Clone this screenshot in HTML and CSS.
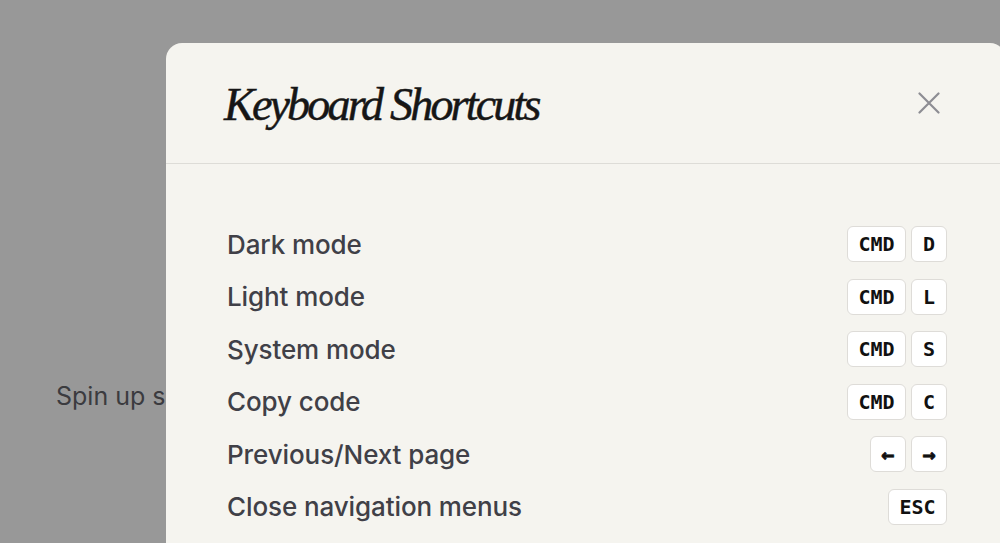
FILE: index.html
```html
<!DOCTYPE html>
<html lang="en">
<head>
<meta charset="utf-8">
<title>Keyboard Shortcuts</title>
<link rel="stylesheet" href="styles.css">
</head>
<body>
<main class="page">
  <p class="intro">Spin up servers in seconds</p>
</main>
<div class="modal" role="dialog" aria-label="Keyboard Shortcuts">
  <header class="modal-header">
    <h2 class="modal-title">Keyboard Shortcuts</h2>
    <button class="close" aria-label="Close">
      <svg width="22" height="22" viewBox="0 0 22 22" fill="none" stroke="currentColor" stroke-width="2.2" stroke-linecap="round"><path d="M1.5 1.5L20.5 20.5M20.5 1.5L1.5 20.5"/></svg>
    </button>
  </header>
  <ul class="shortcuts">
    <li class="row"><span class="label">Dark mode</span><span class="keys"><kbd>CMD</kbd><kbd>D</kbd></span></li>
    <li class="row"><span class="label">Light mode</span><span class="keys"><kbd>CMD</kbd><kbd>L</kbd></span></li>
    <li class="row"><span class="label">System mode</span><span class="keys"><kbd>CMD</kbd><kbd>S</kbd></span></li>
    <li class="row"><span class="label">Copy code</span><span class="keys"><kbd>CMD</kbd><kbd>C</kbd></span></li>
    <li class="row"><span class="label">Previous/Next page</span><span class="keys"><kbd class="arrow">←</kbd><kbd class="arrow">→</kbd></span></li>
    <li class="row"><span class="label">Close navigation menus</span><span class="keys"><kbd>ESC</kbd></span></li>
  </ul>
</div>
</body>
</html>
```

FILE: styles.css
```css
html, body {
  margin: 0;
  padding: 0;
  height: 100%;
  overflow: hidden;
}
body {
  background: #989898;
  font-family: Inter, "Noto Sans", sans-serif;
}
.page {
  padding: 376px 0 0 56px;
}
.intro {
  margin: 0;
  font-size: 25px;
  line-height: 40px;
  color: #3b3b3f;
  white-space: nowrap;
}
.modal {
  position: absolute;
  left: 166px;
  top: 43px;
  width: 840px;
  height: 560px;
  background: #f5f4ef;
  border-radius: 16px;
}
.modal-header {
  height: 120px;
  border-bottom: 1px solid #dddcd7;
  display: flex;
  align-items: center;
  justify-content: space-between;
  padding: 0 66px 0 58px;
}
.modal-title {
  margin: 0;
  font-family: "Liberation Serif", "Times New Roman", serif;
  font-style: italic;
  font-weight: 400;
  font-size: 46px;
  letter-spacing: -2.8px;
  color: #161616;
  padding-top: 2px;
  -webkit-text-stroke: 0.5px #161616;
}
.close {
  background: none;
  border: 0;
  padding: 0;
  color: #8d8d93;
  width: 22px;
  height: 22px;
  cursor: pointer;
  display: flex;
}
.shortcuts {
  list-style: none;
  margin: 0;
  padding: 62px 59px 0 61px;
  display: flex;
  flex-direction: column;
  gap: 16.6px;
}
.row {
  display: flex;
  align-items: center;
  justify-content: space-between;
  height: 36px;
}
.label {
  font-size: 26px;
  font-weight: 500;
  color: #404047;
  letter-spacing: -0.1px;
}
.keys {
  display: flex;
  gap: 5px;
}
kbd {
  box-sizing: border-box;
  min-width: 36px;
  height: 36px;
  padding: 0 10.5px;
  display: flex;
  align-items: center;
  justify-content: center;
  background: #ffffff;
  border: 1px solid #dedcd8;
  border-radius: 6px;
  font-family: "DejaVu Sans Mono", "Liberation Mono", monospace;
  font-weight: 700;
  font-size: 20px;
  color: #111;
}
kbd.arrow {
  font-size: 22px;
  -webkit-text-stroke: 0.6px #111;
}
```
